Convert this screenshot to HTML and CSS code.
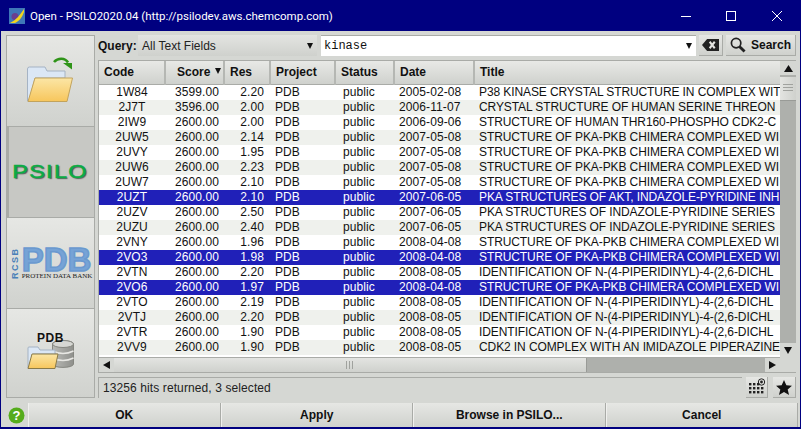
FILE: index.html
```html
<!DOCTYPE html>
<html lang="en">
<head>
<meta charset="UTF-8">
<title>Open - PSILO2020.04</title>
<link rel="stylesheet" href="styles.css">
</head>
<body>
<div class="window">
  <div class="titlebar">
    <svg class="app-icon" width="16" height="16" viewBox="0 0 16 16"><rect width="16" height="16" fill="#3f76b8"/><circle cx="6" cy="8.5" r="3.5" fill="#6a3f8f"/><path d="M1 15 C7 12 11 7 15 1 L15 4 C13 10 10 13 6 15 Z" fill="#f4d41e"/></svg>
    <span class="title-text">Open - PSILO2020.04 (http://psilodev.aws.chemcomp.com)</span>
    <div class="win-btns">
      <svg width="46" height="30" viewBox="0 0 46 30"><path d="M19 15.5 H29" stroke="#fff" fill="none"/></svg>
      <svg width="46" height="30" viewBox="0 0 46 30"><rect x="18.5" y="10.5" width="9" height="9" stroke="#fff" fill="none"/></svg>
      <svg width="46" height="30" viewBox="0 0 46 30"><path d="M18 10 L28 20 M28 10 L18 20" stroke="#fff" fill="none"/></svg>
    </div>
  </div>

  <div class="client">
    <div class="main">
      <div class="sidebar">
        <div class="side-btn open-btn">
          <svg width="46" height="45" viewBox="0 0 46 45">
            <defs>
              <linearGradient id="folderFront" x1="0" y1="0" x2="0" y2="1"><stop offset="0" stop-color="#fbe6a6"/><stop offset="1" stop-color="#f7c65c"/></linearGradient>
            </defs>
            <path d="M0.5 44 V12 a2 2 0 0 1 2 -2 H18 l2 4 H38 V21 H8 L2 44 Z" fill="#dbe7f5" stroke="#a5b3c4"/>
            <path d="M8 21 H45.5 L40 44.5 H1 Z" fill="url(#folderFront)" stroke="#c2a35c"/>
            <path d="M27 5 C31 0.5 38 0.5 41 5.5" stroke="#2f9418" stroke-width="2.6" fill="none"/>
            <path d="M36 6 L45 6 L45 12.5 Z" fill="#2f9418"/>
          </svg>
        </div>
        <div class="side-btn active"><span class="psilo-logo">PSILO</span></div>
        <div class="side-btn">
          <div class="pdb-logo">
            <span class="rcsb">RCSB</span>
            <div class="pdb-right">
              <span class="pdb-big">PDB</span>
              <span class="pdb-sub">PROTEIN DATA BANK</span>
            </div>
          </div>
        </div>
        <div class="side-btn pdb-folder">
          <span class="pdb-label">PDB</span>
          <svg width="48" height="30" viewBox="0 0 48 30">
            <defs>
              <linearGradient id="dbBody" x1="0" y1="0" x2="1" y2="0"><stop offset="0" stop-color="#b9bab6"/><stop offset="1" stop-color="#8f908c"/></linearGradient>
              <linearGradient id="folderFront2" x1="0" y1="0" x2="0" y2="1"><stop offset="0" stop-color="#fbe6a6"/><stop offset="1" stop-color="#f7c65c"/></linearGradient>
            </defs>
            <path d="M25.5 5 C25.5 0.5 46.5 0.5 46.5 5 V25 C46.5 29.5 25.5 29.5 25.5 25 Z" fill="url(#dbBody)" stroke="#858680"/>
            <ellipse cx="36" cy="5" rx="10.5" ry="3.5" fill="#d6d7d3" stroke="#858680"/>
            <path d="M25.5 12 Q36 17 46.5 12 M25.5 19 Q36 24 46.5 19" stroke="#e8e8e4" stroke-width="1.4" fill="none"/>
            <path d="M1 29 V9 a1 1 0 0 1 1 -1 H11 l2 3 H28 V15 H6 L2 29 Z" fill="#dbe7f5" stroke="#a5b3c4"/>
            <path d="M5 15 H31 L28 29.5 H1 Z" fill="url(#folderFront2)" stroke="#8a7a48"/>
          </svg>
        </div>
      </div>

      <div class="content">
        <div class="query-row">
          <label class="query-label">Query:</label>
          <div class="combo"><span>All Text Fields</span><i class="arrow-down"></i></div>
          <div class="search-box"><span class="search-text">kinase</span><i class="arrow-down"></i></div>
          <button class="icon-btn clear-btn">
            <svg width="17" height="12" viewBox="0 0 20 13" preserveAspectRatio="none"><path d="M6 0 H20 V13 H6 L0 6.5 Z" fill="#222"/><path d="M9 3 L15 10 M15 3 L9 10" stroke="#e4e4e0" stroke-width="2.4"/></svg>
          </button>
          <button class="icon-btn search-btn">
            <svg width="16" height="16" viewBox="0 0 17 17"><circle cx="6.5" cy="6.5" r="5" fill="none" stroke="#222" stroke-width="1.8"/><path d="M10 10 L15.5 15.5" stroke="#222" stroke-width="3"/></svg>
            <span>Search</span>
          </button>
        </div>

        <div class="table-wrap">
          <div class="table-inner">
            <div class="table-view">
              <table class="hits">
                <colgroup>
                  <col class="c-code"><col class="c-score"><col class="c-res"><col class="c-project"><col class="c-status"><col class="c-date"><col class="c-title">
                </colgroup>
                <thead>
                  <tr>
                    <th>Code</th>
                    <th class="th-score">Score <i class="sort-arrow"></i></th>
                    <th>Res</th>
                    <th>Project</th>
                    <th>Status</th>
                    <th>Date</th>
                    <th>Title</th>
                  </tr>
                </thead>
                <tbody>
                  <tr><td class="code">1W84</td><td class="score">3599.00</td><td class="res">2.20</td><td>PDB</td><td class="status">public</td><td>2005-02-08</td><td class="title">P38 KINASE CRYSTAL STRUCTURE IN COMPLEX WIT</td></tr>
                  <tr><td class="code">2J7T</td><td class="score">3596.00</td><td class="res">2.00</td><td>PDB</td><td class="status">public</td><td>2006-11-07</td><td class="title">CRYSTAL STRUCTURE OF HUMAN SERINE THREON</td></tr>
                  <tr><td class="code">2IW9</td><td class="score">2600.00</td><td class="res">2.00</td><td>PDB</td><td class="status">public</td><td>2006-09-06</td><td class="title">STRUCTURE OF HUMAN THR160-PHOSPHO CDK2-C</td></tr>
                  <tr><td class="code">2UW5</td><td class="score">2600.00</td><td class="res">2.14</td><td>PDB</td><td class="status">public</td><td>2007-05-08</td><td class="title">STRUCTURE OF PKA-PKB CHIMERA COMPLEXED WI</td></tr>
                  <tr><td class="code">2UVY</td><td class="score">2600.00</td><td class="res">1.95</td><td>PDB</td><td class="status">public</td><td>2007-05-08</td><td class="title">STRUCTURE OF PKA-PKB CHIMERA COMPLEXED WI</td></tr>
                  <tr><td class="code">2UW6</td><td class="score">2600.00</td><td class="res">2.23</td><td>PDB</td><td class="status">public</td><td>2007-05-08</td><td class="title">STRUCTURE OF PKA-PKB CHIMERA COMPLEXED WI</td></tr>
                  <tr><td class="code">2UW7</td><td class="score">2600.00</td><td class="res">2.10</td><td>PDB</td><td class="status">public</td><td>2007-05-08</td><td class="title">STRUCTURE OF PKA-PKB CHIMERA COMPLEXED WI</td></tr>
                  <tr class="sel"><td class="code">2UZT</td><td class="score">2600.00</td><td class="res">2.10</td><td>PDB</td><td class="status">public</td><td>2007-06-05</td><td class="title">PKA STRUCTURES OF AKT, INDAZOLE-PYRIDINE INH</td></tr>
                  <tr><td class="code">2UZV</td><td class="score">2600.00</td><td class="res">2.50</td><td>PDB</td><td class="status">public</td><td>2007-06-05</td><td class="title">PKA STRUCTURES OF INDAZOLE-PYRIDINE SERIES</td></tr>
                  <tr><td class="code">2UZU</td><td class="score">2600.00</td><td class="res">2.40</td><td>PDB</td><td class="status">public</td><td>2007-06-05</td><td class="title">PKA STRUCTURES OF INDAZOLE-PYRIDINE SERIES</td></tr>
                  <tr><td class="code">2VNY</td><td class="score">2600.00</td><td class="res">1.96</td><td>PDB</td><td class="status">public</td><td>2008-04-08</td><td class="title">STRUCTURE OF PKA-PKB CHIMERA COMPLEXED WI</td></tr>
                  <tr class="sel"><td class="code">2VO3</td><td class="score">2600.00</td><td class="res">1.98</td><td>PDB</td><td class="status">public</td><td>2008-04-08</td><td class="title">STRUCTURE OF PKA-PKB CHIMERA COMPLEXED WI</td></tr>
                  <tr><td class="code">2VTN</td><td class="score">2600.00</td><td class="res">2.20</td><td>PDB</td><td class="status">public</td><td>2008-08-05</td><td class="title">IDENTIFICATION OF N-(4-PIPERIDINYL)-4-(2,6-DICHL</td></tr>
                  <tr class="sel"><td class="code">2VO6</td><td class="score">2600.00</td><td class="res">1.97</td><td>PDB</td><td class="status">public</td><td>2008-04-08</td><td class="title">STRUCTURE OF PKA-PKB CHIMERA COMPLEXED WI</td></tr>
                  <tr><td class="code">2VTO</td><td class="score">2600.00</td><td class="res">2.19</td><td>PDB</td><td class="status">public</td><td>2008-08-05</td><td class="title">IDENTIFICATION OF N-(4-PIPERIDINYL)-4-(2,6-DICHL</td></tr>
                  <tr><td class="code">2VTJ</td><td class="score">2600.00</td><td class="res">2.20</td><td>PDB</td><td class="status">public</td><td>2008-08-05</td><td class="title">IDENTIFICATION OF N-(4-PIPERIDINYL)-4-(2,6-DICHL</td></tr>
                  <tr><td class="code">2VTR</td><td class="score">2600.00</td><td class="res">1.90</td><td>PDB</td><td class="status">public</td><td>2008-08-05</td><td class="title">IDENTIFICATION OF N-(4-PIPERIDINYL)-4-(2,6-DICHL</td></tr>
                  <tr><td class="code">2VV9</td><td class="score">2600.00</td><td class="res">1.90</td><td>PDB</td><td class="status">public</td><td>2008-08-05</td><td class="title">CDK2 IN COMPLEX WITH AN IMIDAZOLE PIPERAZINE</td></tr>
                </tbody>
              </table>
            </div>
            <div class="hscroll">
              <div class="sb-btn"><svg width="7" height="8" viewBox="0 0 7 8"><path d="M0 4 L7 0 V8 Z" fill="#111"/></svg></div>
              <div class="hthumb"><span class="grip-h"></span></div>
              <div class="htrack"></div>
              <div class="sb-btn"><svg width="7" height="8" viewBox="0 0 7 8"><path d="M7 4 L0 0 V8 Z" fill="#111"/></svg></div>
            </div>
          </div>
          <div class="vscroll">
            <div class="vbar">
              <div class="sb-btn"><svg width="9" height="7" viewBox="0 0 9 7"><path d="M4.5 0 L9 7 H0 Z" fill="#111"/></svg></div>
              <div class="vthumb"><span class="grip-v"></span></div>
              <div class="vtrack"></div>
              <div class="sb-btn"><svg width="8" height="7" viewBox="0 0 8 7"><path d="M4 7 L8 0 H0 Z" fill="#111"/></svg></div>
            </div>
          </div>
        </div>

        <div class="status-row">
          <div class="status-text">13256 hits returned, 3 selected</div>
          <button class="icon-btn grid-btn">
            <svg width="18" height="18" viewBox="0 0 18 18"><g fill="#222"><rect x="1" y="5" width="2.4" height="2.4"/><rect x="5" y="5" width="2.4" height="2.4"/><rect x="9" y="5" width="2.4" height="2.4"/><rect x="1" y="9" width="2.4" height="2.4"/><rect x="5" y="9" width="2.4" height="2.4"/><rect x="9" y="9" width="2.4" height="2.4"/><rect x="1" y="13" width="2.4" height="2.4"/><rect x="5" y="13" width="2.4" height="2.4"/><rect x="9" y="13" width="2.4" height="2.4"/><rect x="13" y="13" width="2.4" height="2.4"/><rect x="13" y="9" width="2.4" height="2.4"/></g><circle cx="13.5" cy="4" r="3.2" fill="none" stroke="#222"/><circle cx="13.5" cy="4" r="1.4" fill="#222"/></svg>
          </button>
          <button class="icon-btn star-btn">
            <svg width="16" height="15" viewBox="0 0 17 16"><path d="M8.5 0 L11 5.6 L17 6.1 L12.4 10 L13.9 16 L8.5 12.8 L3.1 16 L4.6 10 L0 6.1 L6 5.6 Z" fill="#111"/></svg>
          </button>
        </div>
      </div>
    </div>

    <div class="footer">
      <div class="help-cell">
        <svg width="17" height="17" viewBox="0 0 17 17"><circle cx="8.5" cy="8.5" r="8" fill="#55ac1c"/><text x="8.5" y="13" text-anchor="middle" class="help-q">?</text></svg>
      </div>
      <button class="foot-btn">OK</button>
      <button class="foot-btn">Apply</button>
      <button class="foot-btn">Browse in PSILO...</button>
      <button class="foot-btn">Cancel</button>
    </div>
  </div>
</div>
</body>
</html>
```

FILE: styles.css
```css
* {
  box-sizing: border-box;
}
html, body {
  margin: 0;
  padding: 0;
  width: 801px;
  height: 429px;
  overflow: hidden;
}
body {
  font-family: "Liberation Sans", Arial, sans-serif;
  font-size: 12px;
  color: #111;
}
.window {
  width: 801px;
  height: 429px;
  background: #000080;
  display: flex;
  flex-direction: column;
  padding: 0 1px 2px;
}

/* title bar */
.titlebar {
  height: 31px;
  flex: none;
  display: flex;
  align-items: center;
  color: #fff;
  padding-left: 8px;
}
.app-icon {
  margin-right: 5px;
}
.title-text {
  font-family: Roboto, "Noto Sans", sans-serif;
  font-size: 11.5px;
  flex: 1;
}
.win-btns {
  display: flex;
}
.win-btns svg {
  display: block;
}

/* client area */
.client {
  flex: 1;
  background: #d5d7d3;
  display: flex;
  flex-direction: column;
  padding: 4px 4px 0 5px;
  min-height: 0;
}
.main {
  flex: 1;
  display: flex;
  gap: 3px;
  min-height: 0;
}

/* left buttons */
.sidebar {
  width: 89px;
  height: 363px;
  display: flex;
  flex-direction: column;
  border: 1px solid #a9aba7;
}
.side-btn {
  height: 91px;
  flex: none;
  display: flex;
  align-items: center;
  justify-content: center;
  background: linear-gradient(#e6e7e4, #d0d2ce);
  border-bottom: 1px solid #a9aba7;
}
.side-btn:last-child {
  flex: 1;
  border-bottom: 0;
}
.side-btn.active {
  background: #c7c8c4;
  box-shadow: inset 2px 0 0 #a9aba7;
}
.open-btn {
  padding: 0 1px 4px 0;
}
.psilo-logo {
  font-family: "Liberation Sans", sans-serif;
  font-size: 18px;
  letter-spacing: 1px;
  color: #0bab44;
  -webkit-text-stroke: 0.5px #0bab44;
  text-shadow: 1px 1px 1px #555;
  transform: scaleX(1.3);
}
.pdb-logo {
  display: flex;
  align-items: stretch;
  gap: 2px;
  margin-left: 1px;
}
.rcsb {
  writing-mode: vertical-rl;
  transform: rotate(180deg);
  text-align: center;
  font-weight: bold;
  font-size: 9px;
  letter-spacing: 1.5px;
  color: #4a80b8;
}
.pdb-right {
  display: flex;
  flex-direction: column;
  align-items: flex-start;
}
.pdb-big {
  font-weight: bold;
  font-size: 33px;
  line-height: 25px;
  color: #76a3d6;
  -webkit-text-stroke: 1.5px #6a99cf;
  display: block;
  width: 68px;
  white-space: nowrap;
}
.pdb-sub {
  font-family: "Liberation Serif", serif;
  font-size: 7px;
  line-height: 7px;
  margin-top: 1px;
  color: #222;
  white-space: nowrap;
}
.pdb-folder {
  flex-direction: column;
  padding-bottom: 5px;
}
.pdb-label {
  font-weight: bold;
  font-size: 12px;
  line-height: 12px;
  letter-spacing: 0.6px;
  margin-bottom: -5px;
  position: relative;
  z-index: 1;
}
.pdb-folder svg {
  display: block;
}

/* right side */
.content {
  width: 698px;
  display: flex;
  flex-direction: column;
  min-height: 0;
}
.query-row {
  height: 21px;
  flex: none;
  display: flex;
  align-items: stretch;
}
.query-label {
  font-weight: bold;
  align-self: center;
  width: 40px;
  flex: none;
}
.combo {
  width: 179px;
  flex: none;
  background: linear-gradient(#e3e4e1, #cfd1cd);
  display: flex;
  align-items: center;
  justify-content: space-between;
  padding: 0 4px;
  color: #222;
}
.arrow-down {
  width: 0;
  height: 0;
  border-left: 3px solid transparent;
  border-right: 3px solid transparent;
  border-top: 6px solid #111;
  display: block;
}
.search-box {
  width: 375px;
  flex: none;
  margin-left: 4px;
  background: #fff;
  display: flex;
  align-items: center;
  justify-content: space-between;
  padding: 0 4px 0 3px;
  border-top: 1px solid #a9aba7;
}
.search-text {
  font-family: "Liberation Mono", monospace;
  font-size: 12px;
}
.icon-btn {
  border: 0;
  padding: 0;
  margin: 0;
  font: inherit;
  color: inherit;
  background: linear-gradient(#e6e7e4, #cfd1cd);
  border-right: 1px solid #a9aba7;
  border-bottom: 1px solid #a9aba7;
  display: flex;
  align-items: center;
  justify-content: center;
}
.clear-btn {
  width: 24px;
  margin-left: 3px;
  flex: none;
}
.search-btn {
  width: 70px;
  margin-left: 3px;
  gap: 5px;
  font-weight: bold;
  flex: none;
}

/* table */
.table-wrap {
  height: 313px;
  flex: none;
  margin-top: 4px;
  display: flex;
  border-top: 1px solid #a9aba7;
  border-bottom: 1px solid #a9aba7;
  border-left: 1px solid #a9aba7;
}
.table-inner {
  width: 681px;
  flex: none;
  display: flex;
  flex-direction: column;
  min-width: 0;
}
.table-view {
  height: 296px;
  flex: none;
  overflow: hidden;
  background: #fff;
}
.hits {
  border-collapse: collapse;
  table-layout: fixed;
  width: 681px;
}
.c-code { width: 66px; }
.c-score { width: 59px; }
.c-res { width: 46px; }
.c-project { width: 65px; }
.c-status { width: 59px; }
.c-date { width: 80px; }
.c-title { width: 306px; }
.hits th {
  height: 23px;
  padding: 0 0 0 5px;
  text-align: left;
  font-size: 12px;
  font-weight: bold;
  background: linear-gradient(#e8e9e6, #cfd1cd);
  border-right: 2px solid #b5b7b3;
  border-bottom: 1px solid #a9aba7;
}
.hits th:last-child {
  border-right: 0;
}
.hits .th-score {
  padding-left: 11px;
}
.sort-arrow {
  display: inline-block;
  width: 0;
  height: 0;
  border-left: 3px solid transparent;
  border-right: 3px solid transparent;
  border-top: 6px solid #111;
  margin-left: 1px;
  vertical-align: 2px;
}
.hits td {
  height: 15px;
  padding: 0 0 0 5px;
  line-height: 15px;
  white-space: nowrap;
  overflow: hidden;
  letter-spacing: 0.1px;
}
.hits tbody tr:nth-child(even) td {
  background: #eff1ed;
}
.hits tbody tr.sel td {
  background: #2020b8;
  color: #fff;
}
.hits td.code {
  text-align: center;
  padding: 0;
}
.hits td.score {
  text-align: right;
  padding: 0 5px 0 0;
}
.hits td.res {
  text-align: right;
  padding: 0 6px 0 0;
}
.hits td.status {
  padding-left: 8px;
}
.hits td.title {
  letter-spacing: -0.1px;
}

/* scrollbars */
.hscroll {
  flex: 1;
  display: flex;
  background: #aeb0ac;
  border-top: 1px solid #a9aba7;
}
.vscroll {
  width: 16px;
  flex: none;
  padding-bottom: 15px;
}
.vbar {
  height: 100%;
  display: flex;
  flex-direction: column;
  background: #aeb0ac;
}
.sb-btn {
  flex: none;
  width: 15px;
  height: 14px;
  display: flex;
  align-items: center;
  justify-content: center;
  background: #d5d7d3;
}
.sb-btn svg {
  display: block;
  flex: none;
}
.vbar .sb-btn {
  width: 100%;
}
.hthumb {
  width: 473px;
  flex: none;
  background: linear-gradient(#e3e4e1, #cfd1cd);
  border-right: 1px solid #999b97;
  display: flex;
  align-items: center;
  justify-content: center;
}
.htrack, .vtrack {
  flex: 1;
}
.vthumb {
  height: 24px;
  flex: none;
  margin-top: 2px;
  background: linear-gradient(90deg, #e3e4e1, #cfd1cd);
  border-bottom: 1px solid #999b97;
  display: flex;
  align-items: center;
  justify-content: center;
}
.grip-h {
  width: 9px;
  height: 8px;
  background: repeating-linear-gradient(90deg, #a0a29e 0 1px, transparent 1px 3px);
}
.grip-v {
  width: 10px;
  height: 9px;
  background: repeating-linear-gradient(#a0a29e 0 1px, transparent 1px 3px);
}

/* status row */
.status-row {
  height: 21px;
  flex: none;
  margin-top: 4px;
  display: flex;
}
.status-text {
  flex: 1;
  display: flex;
  align-items: center;
  padding-left: 4px;
  letter-spacing: 0.1px;
  border-top: 1px solid #a9aba7;
  border-left: 1px solid #a9aba7;
  color: #222;
}
.grid-btn {
  width: 22px;
  flex: none;
  margin-left: 4px;
}
.star-btn {
  width: 23px;
  flex: none;
  margin-left: 5px;
}

/* bottom buttons */
.footer {
  height: 24px;
  flex: none;
  margin: 4px -2px 0 0;
  display: flex;
}
.help-cell {
  width: 22px;
  flex: none;
  display: flex;
  align-items: center;
  justify-content: center;
  padding-right: 2px;
}
.help-q {
  font-family: "Liberation Sans", sans-serif;
  font-weight: bold;
  font-size: 13px;
  fill: #fff;
}
.foot-btn {
  flex: 1;
  border: 0;
  border-left: 1px solid #f0f0ee;
  border-right: 1px solid #a9aba7;
  padding: 0;
  margin: 0;
  font: inherit;
  font-weight: bold;
  color: #111;
  background: linear-gradient(#e6e7e4, #cfd1cd);
}
```
